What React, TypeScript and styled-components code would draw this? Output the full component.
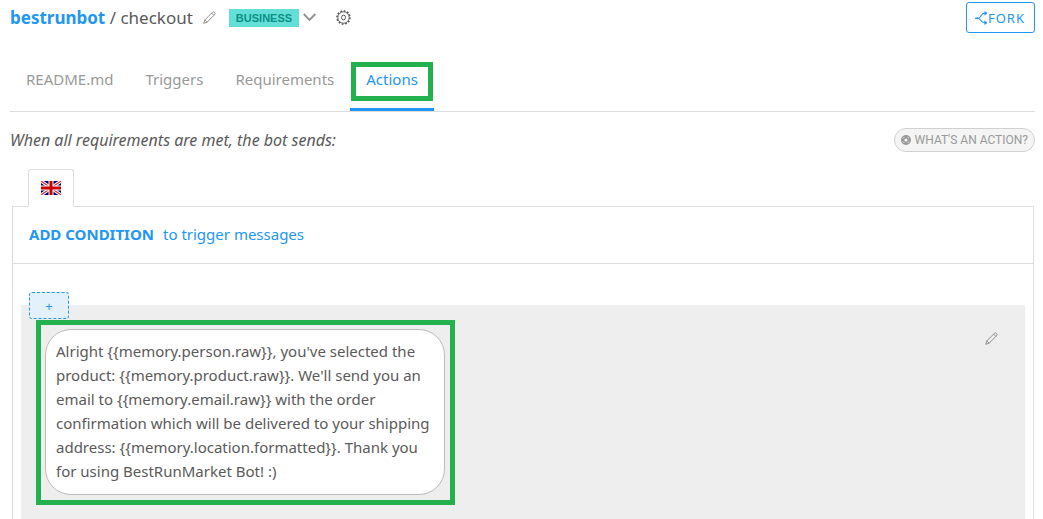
import React from "react";
import styled, { createGlobalStyle } from "styled-components";

const blue = "#2196f3";
const green = "#22b14c";
const line = "#dcdcdc";

const GlobalStyle = createGlobalStyle`
  *, *::before, *::after { box-sizing: border-box; }
  body {
    margin: 0;
    background: #fff;
    color: #5a5a5a;
    font-family: "Noto Sans", "Open Sans", sans-serif;
    font-size: 15px;
    line-height: 24px;
  }
  button { font-family: inherit; cursor: pointer; }
  a { color: ${blue}; text-decoration: none; }
  svg { display: block; }
`;

const Page = styled.div`
  display: flex;
  flex-direction: column;
  min-height: 100vh;
  padding: 0 8px 0 10px;
`;

const Header = styled.header`
  display: flex;
  align-items: center;
  justify-content: space-between;
  height: 35px;
`;

const TitleBar = styled.div`
  display: flex;
  align-items: center;
`;

const Title = styled.h1`
  margin: 0 10px 0 0;
  font-size: 17px;
  font-weight: 400;
  line-height: 24px;
`;

const IconButton = styled.button<{ $gap?: number }>`
  display: flex;
  padding: 0;
  margin: 0 ${(p) => p.$gap ?? 0}px 0 0;
  border: 0;
  background: none;
  color: #909090;
`;

const Badge = styled.span`
  margin-right: 4px;
  padding: 0 7px;
  background: #63dfd8;
  color: #0a8f84;
  font-family: "Liberation Sans", sans-serif;
  font-size: 11px;
  font-weight: 700;
  line-height: 18px;
`;

const ForkButton = styled.button`
  display: flex;
  align-items: center;
  height: 31px;
  padding: 0 9px 0 8px;
  border: 1px solid ${blue};
  border-radius: 3px;
  background: #fff;
  color: ${blue};
  font-size: 13px;
  letter-spacing: 1px;
`;

const Tabs = styled.nav`
  display: flex;
  margin-top: 22px;
  border-bottom: 1px solid ${line};
`;

const Tab = styled.a<{ $active?: boolean }>`
  position: relative;
  padding: 10px 16px 17px;
  border-bottom: 3px solid ${(p) => (p.$active ? blue : "transparent")};
  color: ${(p) => (p.$active ? blue : "#999")};
`;

const TabMarker = styled.span`
  position: absolute;
  inset: 5px 1px 7px;
  border: 5px solid ${green};
  pointer-events: none;
`;

const Intro = styled.div`
  display: flex;
  align-items: center;
  justify-content: space-between;
  margin-top: 16px;
`;

const IntroText = styled.p`
  margin: 0;
  font-size: 16px;
  font-style: italic;
  line-height: 22px;
`;

const HelpButton = styled.button`
  display: flex;
  align-items: center;
  gap: 4px;
  height: 24px;
  padding: 0 6px;
  border: 1px solid #d0d0d0;
  border-radius: 12px;
  background: #f4f4f4;
  color: #999;
  font-family: Roboto, "Liberation Sans", sans-serif;
  font-size: 12px;
`;

const LanguageTabs = styled.div`
  display: flex;
  margin: 17px 0 -1px 18px;
`;

const LanguageTab = styled.button`
  position: relative;
  z-index: 1;
  padding: 11px 12px;
  border: 1px solid ${line};
  border-bottom-color: #fff;
  border-radius: 3px 3px 0 0;
  background: #fff;
`;

const Panel = styled.main`
  display: flex;
  flex: 1;
  flex-direction: column;
  margin: 0 1px 0 2px;
  border: 1px solid ${line};
  border-bottom: 0;
`;

const ConditionRow = styled.div`
  padding: 15px 16px 17px;
  border-bottom: 1px solid ${line};
`;

const ConditionLink = styled.a`
  display: inline-flex;
  gap: 9px;
`;

const Messages = styled.section`
  display: flex;
  flex: 1;
  flex-direction: column;
  padding: 28px 8px 0;
`;

const AddButton = styled.button`
  position: relative;
  z-index: 1;
  width: 40px;
  height: 27px;
  margin: 0 0 -14px 8px;
  padding: 0;
  border: 1px dashed ${blue};
  border-radius: 3px;
  background: #e3f1fc;
  color: ${blue};
  font-size: 13px;
`;

const MessageGroup = styled.div`
  display: flex;
  flex: 1;
  align-items: flex-start;
  justify-content: space-between;
  padding: 15px 27px 14px 15px;
  background: #eee;
`;

const BubbleMarker = styled.div`
  max-width: 419px;
  padding: 4px 5px 5px 4px;
  border: 5px solid ${green};
`;

const Bubble = styled.p`
  margin: 0;
  padding: 9px 10px 11px;
  border: 1px solid #bbb;
  border-radius: 26px;
  background: #fff;
`;

const EditSlot = styled.div`
  padding-top: 12px;
`;

const Pencil = () => (
  <svg width="13" height="13" viewBox="0 0 13 13" fill="none" stroke="currentColor" strokeLinejoin="round">
    <path d="M0.7 12.3 L1.8 8.9 L9.5 1.2 Q10.3 0.4 11.1 1.2 L11.8 1.9 Q12.6 2.7 11.8 3.5 L4.1 11.2 Z M8.6 2.1 L10.9 4.4 M1.8 8.9 L4.1 11.2" />
  </svg>
);

const Chevron = () => (
  <svg width="13" height="9" viewBox="0 0 13 9" fill="none" stroke="currentColor" strokeWidth="1.8">
    <path d="M0.7 1 L6.5 7 L12.3 1" />
  </svg>
);

const Gear = () => (
  <svg width="15" height="15" viewBox="0 0 15 15" fill="none" stroke="#484848">
    <circle cx="7.5" cy="7.5" r="5.7" strokeWidth="0.9" />
    <circle cx="7.5" cy="7.5" r="6.6" strokeWidth="1.3" strokeDasharray="1.73 1.73" />
    <ellipse cx="7.5" cy="7.5" rx="2" ry="2.4" strokeWidth="0.9" />
  </svg>
);

const ForkIcon = () => (
  <svg width="13" height="14" viewBox="0 0 13 14" fill="none" stroke="currentColor" strokeWidth="1.1">
    <path d="M0 7.3 H4 L7 3.5 Q8 2.3 9.5 2.3 H12 M4 7.3 L7 10.5 Q8 11.7 9.5 11.7 H12" />
    <path d="M9.7 0.4 L12 2.3 L9.7 4.3 Z M9.7 9.7 L12 11.7 L9.7 13.6 Z M0 7.3 L3 6.6 V8 Z" fill="currentColor" strokeWidth="0.5" />
  </svg>
);

const Lifebuoy = () => (
  <svg width="10" height="10" viewBox="0 0 10 10" fill="none">
    <circle cx="5" cy="5" r="5" fill="currentColor" />
    <circle cx="5" cy="5" r="1.6" fill="#f4f4f4" />
    <path d="M2 3.4 L3.4 2 M6.6 2 L8 3.4 M2 6.6 L3.4 8 M6.6 8 L8 6.6" stroke="#f4f4f4" strokeWidth="0.9" />
  </svg>
);

const UkFlag = () => (
  <svg width="20" height="14" viewBox="0 0 20 14" role="img" aria-label="English">
    <rect width="20" height="14" fill="#006" />
    <path d="M0 0 L20 14 M20 0 L0 14" stroke="#fff" strokeWidth="3.2" />
    <path d="M0 0 L20 14 M20 0 L0 14" stroke="#d8232f" strokeWidth="1.1" />
    <path d="M10 0 V14 M0 7 H20" stroke="#fff" strokeWidth="5" />
    <path d="M10 0 V14 M0 7 H20" stroke="#c00" strokeWidth="3" />
  </svg>
);

const sections = ["README.md", "Triggers", "Requirements", "Actions"];

const message =
  "Alright {{memory.person.raw}}, you've selected the product: {{memory.product.raw}}. " +
  "We'll send you an email to {{memory.email.raw}} with the order confirmation which will be " +
  "delivered to your shipping address: {{memory.location.formatted}}. " +
  "Thank you for using BestRunMarket Bot! :)";

export default function App() {
  return (
    <>
      <GlobalStyle />
      <Page>
        <Header>
          <TitleBar>
            <Title>
              <a href="#bot"><b>bestrunbot</b></a> / checkout
            </Title>
            <IconButton $gap={13} aria-label="Rename skill"><Pencil /></IconButton>
            <Badge>BUSINESS</Badge>
            <IconButton $gap={20} aria-label="Change type"><Chevron /></IconButton>
            <IconButton aria-label="Settings"><Gear /></IconButton>
          </TitleBar>
          <ForkButton><ForkIcon />FORK</ForkButton>
        </Header>
        <Tabs>
          {sections.map((name) => (
            <Tab key={name} href={`#${name}`} $active={name === "Actions"}>
              {name}
              {name === "Actions" && <TabMarker />}
            </Tab>
          ))}
        </Tabs>
        <Intro>
          <IntroText>When all requirements are met, the bot sends:</IntroText>
          <HelpButton><Lifebuoy />WHAT'S AN ACTION?</HelpButton>
        </Intro>
        <LanguageTabs>
          <LanguageTab><UkFlag /></LanguageTab>
        </LanguageTabs>
        <Panel>
          <ConditionRow>
            <ConditionLink href="#condition">
              <b>ADD CONDITION</b>
              <span>to trigger messages</span>
            </ConditionLink>
          </ConditionRow>
          <Messages>
            <AddButton aria-label="Add message">+</AddButton>
            <MessageGroup>
              <BubbleMarker>
                <Bubble>{message}</Bubble>
              </BubbleMarker>
              <EditSlot>
                <IconButton aria-label="Edit message"><Pencil /></IconButton>
              </EditSlot>
            </MessageGroup>
          </Messages>
        </Panel>
      </Page>
    </>
  );
}
